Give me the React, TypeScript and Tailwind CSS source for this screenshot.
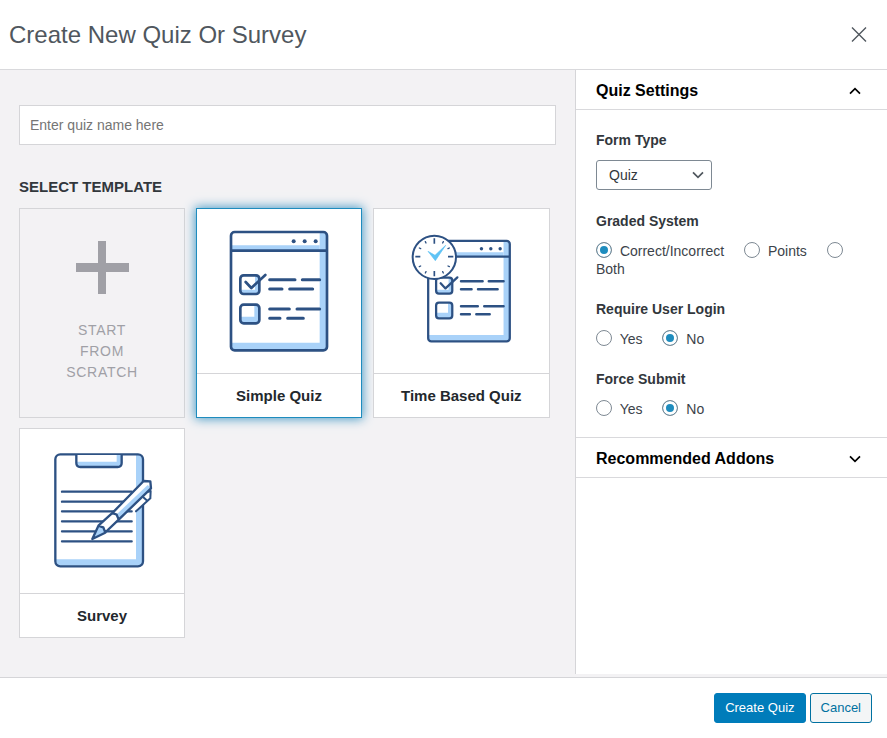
import React, { useState } from 'react';

const NAVY = '#2d5183';
const SKY = '#a9d2f9';

const ChecklistLines: React.FC = () => (
  <>
    <rect x="151" y="227" width="57" height="56" rx="10" fill="#fff" />
    <path d="M195 229 V270 H153 V273 Q153 281 161 281 H198 Q207 281 207 272 V229 Z" fill={SKY} />
    <rect x="151" y="227" width="57" height="56" rx="10" fill="none" stroke={NAVY} strokeWidth="8" />
    <path d="M167 247 L184 265 L226 226" fill="none" stroke={NAVY} strokeWidth="8" strokeLinecap="round" strokeLinejoin="round" />
    <rect x="151" y="315" width="57" height="56" rx="10" fill="#fff" />
    <path d="M193 317 V351 H153 V361 Q153 369 161 369 H198 Q207 369 207 360 V317 Z" fill={SKY} />
    <rect x="151" y="315" width="57" height="56" rx="10" fill="none" stroke={NAVY} strokeWidth="8" />
    <path
      d="M239 240 H315 M337 240 H389 M239 268 H276 M299 268 H368 M239 328 H298 M321 328 H389 M239 356 H270 M293 356 H340"
      fill="none"
      stroke={NAVY}
      strokeWidth="9"
      strokeLinecap="round"
    />
  </>
);

const BrowserChecklist: React.FC = () => (
  <>
    <rect x="123" y="97" width="288" height="355" rx="11" fill="#fff" />
    <path d="M389 99 H403 Q409 99 409 105 V444 Q409 450 403 450 H131 Q125 450 125 444 V429 H389 Z" fill={SKY} />
    <path d="M125 137 H389 V153 H125 Z" fill={SKY} />
    <rect x="123" y="97" width="288" height="355" rx="11" fill="none" stroke={NAVY} strokeWidth="8" />
    <path d="M123 153 H411" stroke={NAVY} strokeWidth="8" />
    <circle cx="311" cy="125" r="6" fill={NAVY} />
    <circle cx="344" cy="125" r="6" fill={NAVY} />
    <circle cx="377" cy="125" r="6" fill={NAVY} />
    <ChecklistLines />
  </>
);

const SimpleQuizIcon: React.FC = () => (
  <svg width="100" height="122" viewBox="117 91 300 366" aria-hidden="true">
    <BrowserChecklist />
  </svg>
);

const TimeQuizIcon: React.FC = () => (
  <svg width="104" height="114" viewBox="133 102 312 342" aria-hidden="true">
    <g transform="translate(86 40) scale(0.85)">
      <BrowserChecklist />
    </g>
    <circle cx="209" cy="172" r="65" fill="#fff" stroke={NAVY} strokeWidth="6" />
    <path d="M209 115 V131 M209 213 V229 M152 170 H167 M250 170 H266" stroke={NAVY} strokeWidth="5" />
    <path
      d="M182 125 L184 129 M236 125 L234 129 M164 144 L168 146 M254 144 L250 146 M164 200 L168 198 M254 200 L250 198 M182 219 L184 215 M236 219 L234 215"
      stroke={NAVY}
      strokeWidth="4"
      strokeLinecap="round"
    />
    <path d="M190 154 L211 166 L243 136 L212 182 Z" fill="#5fc3f5" stroke="#5fc3f5" strokeWidth="2" />
  </svg>
);

const SurveyIcon: React.FC = () => (
  <svg width="102" height="118" viewBox="123 96 306 354" aria-hidden="true">
    <rect x="136" y="103" width="263" height="336" rx="15" fill="#fff" />
    <path d="M378 105 H386 Q397 105 397 117 V425 Q397 437 385 437 H150 Q138 437 138 425 V418 H378 Z" fill={SKY} />
    <rect x="136" y="103" width="263" height="336" rx="15" fill="none" stroke={NAVY} strokeWidth="7" />
    <path d="M199 105 V129 Q199 141 211 141 H323 Q335 141 335 129 V105 Z" fill="#fff" />
    <path d="M320 105 V125 H201 V130 Q201 139 211 139 H323 Q333 139 333 129 V105 Z" fill={SKY} />
    <path d="M199 105 V129 Q199 141 211 141 H323 Q335 141 335 129 V105" fill="none" stroke={NAVY} strokeWidth="7" />
    <path
      d="M156 215 H365 M156 245 H365 M156 274 H365 M156 304 H365 M156 334 H365 M156 364 H365"
      stroke={NAVY}
      strokeWidth="7"
      strokeLinecap="round"
    />
    {/* pen */}
    <path d="M378 274 L421 235 L420 213 L404 216 L366 254 Z" fill="#fff" />
    <path d="M378 274 L421 235 L422 213 L406 218 M400 232 L410 241" fill="none" stroke={NAVY} strokeWidth="6" strokeLinecap="round" strokeLinejoin="round" />
    <path d="M247 357 L266 316 L309 277 L401 183 L421 184 L423 205 L326 299 L284 339 Z" fill="#fff" />
    <path d="M423 203 L326 297 L317 286 L413 195 Z" fill={SKY} />
    <path d="M247 357 L266 319 L278 321 L286 338 Z" fill={SKY} />
    <path
      d="M247 357 L266 316 L309 277 L401 183 L421 184 L423 205 L326 299 L284 339 Z M266 318 L280 322 L286 338 M307 279 L320 284 L326 299"
      fill="none"
      stroke={NAVY}
      strokeWidth="7"
      strokeLinejoin="round"
      strokeLinecap="round"
    />
  </svg>
);

const Chevron: React.FC<{ up?: boolean }> = ({ up }) => (
  <svg width="12" height="8" viewBox="0 0 12 8" fill="none" stroke="currentColor" strokeWidth="1.7" aria-hidden="true">
    <path d={up ? 'M1 6.7 L6 1.7 L11 6.7' : 'M1 1.3 L6 6.3 L11 1.3'} />
  </svg>
);

interface TemplateCardProps {
  title: string;
  selected: boolean;
  onSelect: () => void;
  children: React.ReactNode;
}

const TemplateCard: React.FC<TemplateCardProps> = ({ title, selected, onSelect, children }) => (
  <button
    type="button"
    aria-pressed={selected}
    onClick={onSelect}
    className={`flex min-w-[166px] flex-col border bg-white ${
      selected ? 'border-[#1e8cbe] shadow-[0_0_10px_1px_#4a9cc6]' : 'border-[#d5d5d8]'
    }`}
  >
    <span className="flex h-[164px] w-full items-center justify-center">{children}</span>
    <span className="flex h-11 w-full items-center justify-center border-t border-[#d5d5d8] px-[27px] pt-0.5 text-[15px] font-bold text-[#23282d]">
      {title}
    </span>
  </button>
);

interface RadioGroupProps {
  legend: string;
  name: string;
  options: string[];
  initial: string;
}

const RadioGroup: React.FC<RadioGroupProps> = ({ legend, name, options, initial }) => {
  const [value, setValue] = useState(initial);
  return (
    <fieldset>
      <legend className="mb-[11px] text-sm leading-5 font-bold text-[#32373c]">{legend}</legend>
      <div className="text-sm leading-[18px] text-[#3c434a]">
        {options.map((option) => (
          <React.Fragment key={option}>
            <label className="mr-4">
              <input
                type="radio"
                name={name}
                value={option}
                checked={value === option}
                onChange={() => setValue(option)}
                className="-mt-1 mr-1 size-4 appearance-none rounded-full border border-[#7e8993] bg-white align-middle checked:bg-[#1e8cbe] checked:shadow-[inset_0_0_0_3px_#fff]"
              />{' '}
              {option}
            </label>{' '}
          </React.Fragment>
        ))}
      </div>
    </fieldset>
  );
};

const App: React.FC = () => {
  const [template, setTemplate] = useState('simple');
  const [settingsOpen, setSettingsOpen] = useState(true);
  const [addonsOpen, setAddonsOpen] = useState(false);

  return (
    <div className="flex min-h-screen flex-col bg-white font-['Liberation_Sans',Arial,sans-serif]">
      <header className="flex h-[70px] items-center justify-between border-b border-[#d9d9dc] pr-5 pl-[9px]">
        <h2 className="text-2xl text-[#50575e]">Create New Quiz Or Survey</h2>
        <button type="button" aria-label="Close" className="text-[#50575e]">
          <svg width="16" height="16" viewBox="0 0 16 16" fill="none" stroke="currentColor" strokeWidth="1.4" aria-hidden="true">
            <path d="M1 0.5 L15 14.5 M15 0.5 L1 14.5" />
          </svg>
        </button>
      </header>

      <div className="flex flex-1 bg-[#f3f2f4]">
        <main className="flex-1 px-[19px] pt-[35px] pb-[39px]">
          <input
            type="text"
            aria-label="Quiz name"
            placeholder="Enter quiz name here"
            className="h-10 w-full border border-[#d5d5d8] bg-white px-2.5 text-sm text-[#32373c] placeholder:text-[#757575]"
          />
          <h3 className="mt-8 text-[15px] leading-5 font-bold text-[#32373c]">SELECT TEMPLATE</h3>
          <div className="mt-[11px] flex flex-wrap gap-x-[11px] gap-y-2.5">
            <button
              type="button"
              onClick={() => setTemplate('scratch')}
              className="flex h-[210px] w-[166px] flex-col items-center border border-[#d5d5d8] pt-8 text-[#a0a0a6]"
            >
              <svg width="53" height="53" viewBox="0 0 53 53" fill="currentColor" aria-hidden="true">
                <path d="M22 0 H30 V22 H53 V31 H30 V53 H22 V31 H0 V22 H22 Z" />
              </svg>
              <span className="mt-[26px] w-20 text-sm leading-[21px] tracking-wider">START FROM SCRATCH</span>
            </button>
            <TemplateCard title="Simple Quiz" selected={template === 'simple'} onSelect={() => setTemplate('simple')}>
              <SimpleQuizIcon />
            </TemplateCard>
            <TemplateCard title="Time Based Quiz" selected={template === 'time'} onSelect={() => setTemplate('time')}>
              <TimeQuizIcon />
            </TemplateCard>
            <TemplateCard title="Survey" selected={template === 'survey'} onSelect={() => setTemplate('survey')}>
              <SurveyIcon />
            </TemplateCard>
          </div>
        </main>

        <aside className="mb-[3px] w-[312px] shrink-0 border-l border-[#d5d5d8] bg-white">
          <button
            type="button"
            aria-expanded={settingsOpen}
            onClick={() => setSettingsOpen(!settingsOpen)}
            className="flex h-10 w-full items-center justify-between border-b border-[#d9d9dc] pt-0.5 pr-[26px] pl-5 text-base font-bold text-black"
          >
            Quiz Settings
            <Chevron up={settingsOpen} />
          </button>
          {settingsOpen && (
            <div className="flex flex-col gap-[21px] px-5 pt-5 pb-[19px]">
              <div>
                <label htmlFor="form-type" className="block text-sm leading-5 font-bold text-[#32373c]">
                  Form Type
                </label>
                <div className="relative mt-2.5 w-[116px] text-[#50575e]">
                  <select
                    id="form-type"
                    defaultValue="Quiz"
                    className="block h-[30px] w-full appearance-none rounded-[3px] border border-[#7e8993] bg-white pr-6 pl-3 text-sm text-[#32373c]"
                  >
                    <option>Quiz</option>
                    <option>Survey</option>
                  </select>
                  <span className="pointer-events-none absolute inset-y-0 right-2 flex items-center">
                    <Chevron />
                  </span>
                </div>
              </div>
              <RadioGroup
                legend="Graded System"
                name="graded-system"
                options={['Correct/Incorrect', 'Points', 'Both']}
                initial="Correct/Incorrect"
              />
              <RadioGroup legend="Require User Login" name="require-login" options={['Yes', 'No']} initial="No" />
              <RadioGroup legend="Force Submit" name="force-submit" options={['Yes', 'No']} initial="No" />
            </div>
          )}
          <button
            type="button"
            aria-expanded={addonsOpen}
            onClick={() => setAddonsOpen(!addonsOpen)}
            className="flex h-[41px] w-full items-center justify-between border-y border-[#d9d9dc] pt-0.5 pr-[26px] pl-5 text-base font-bold text-black"
          >
            Recommended Addons
            <Chevron up={addonsOpen} />
          </button>
        </aside>
      </div>

      <footer className="flex justify-end gap-1 border-t border-[#d5d5d8] px-[15px] py-[15px]">
        <button type="button" className="h-[30px] rounded-[3px] border border-[#007cba] bg-[#007cba] px-2.5 text-[13px] text-white">
          Create Quiz
        </button>
        <button type="button" className="h-[30px] rounded-[3px] border border-[#0071a1] bg-[#f3f5f6] px-2.5 text-[13px] text-[#0071a1]">
          Cancel
        </button>
      </footer>
    </div>
  );
};

export default App;
